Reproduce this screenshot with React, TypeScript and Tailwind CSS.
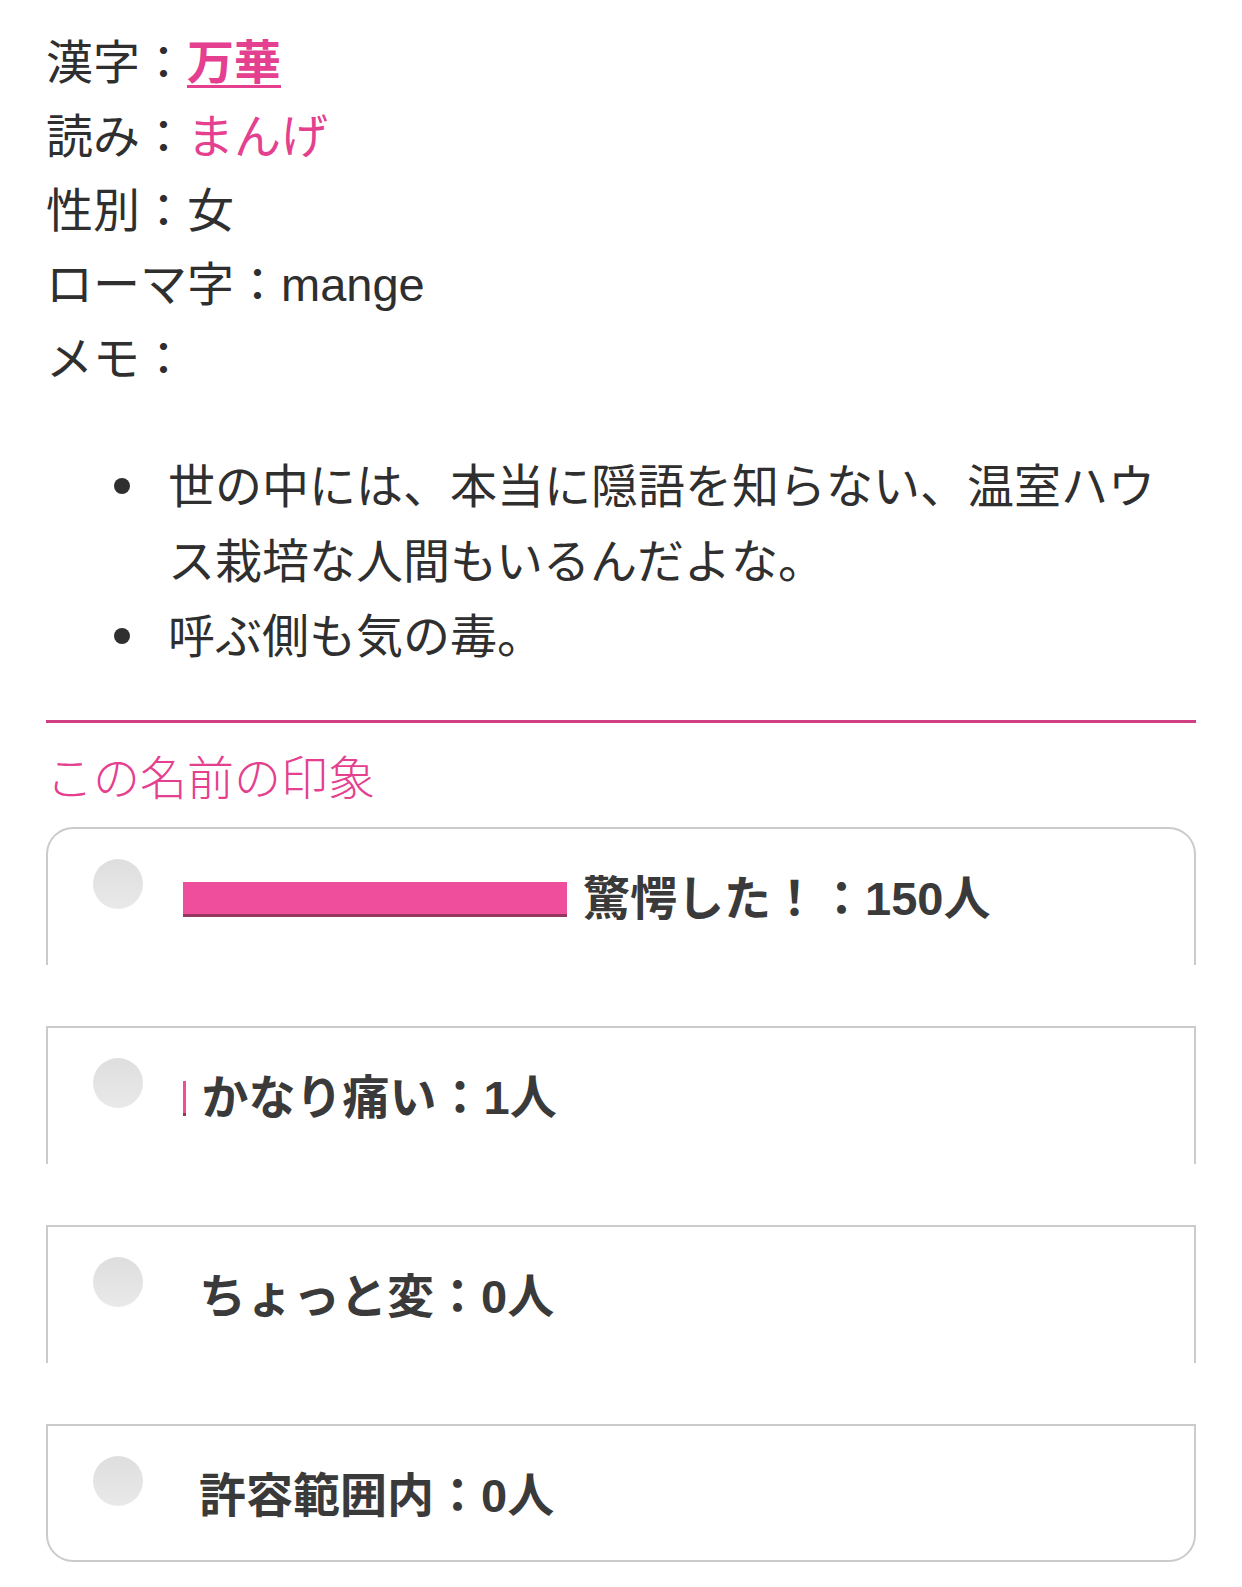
import React from "react";

const FONT = "font-['Liberation_Sans','Noto_Sans_CJK_JP',sans-serif]";

interface Impression {
  label: string;
  count: number;
}

const impressions: Impression[] = [
  { label: "驚愕した！", count: 150 },
  { label: "かなり痛い", count: 1 },
  { label: "ちょっと変", count: 0 },
  { label: "許容範囲内", count: 0 },
];

const MAX_BAR = 384;

const ImpressionRow: React.FC<{ item: Impression; max: number; first: boolean; last: boolean }> = ({
  item,
  max,
  first,
  last,
}) => {
  const barWidth = max > 0 ? (MAX_BAR * item.count) / max : 0;

  return (
    <div
      className={
        last
          ? "flex items-start h-[138px] border-2 border-[#cbcbcb] rounded-b-[27px] bg-white"
          : `flex items-start h-[138px] mb-[61px] border-t-2 border-x-2 border-[#cbcbcb] bg-white ${
              first ? "rounded-t-[27px]" : ""
            }`
      }
    >
      <span className="ml-[45px] mt-[30px] w-[50px] h-[50px] shrink-0 rounded-full bg-gradient-to-b from-[#dedede] to-[#e9e9e9]" />
      <div className="ml-[40px] mt-[45px] h-[50px] flex items-center">
        <span
          className="h-[35px] mr-[16px] shrink-0 bg-[#ee4e9b] border-b-[3px] border-[#93375f]"
          style={{ width: barWidth, borderBottomWidth: barWidth > 0 ? 3 : 0 }}
        />
        <span className="text-[47px] leading-[50px] font-bold text-[#3a3a3a] whitespace-nowrap">
          {item.label}：{item.count}人
        </span>
      </div>
    </div>
  );
};

export default function App() {
  const max = Math.max(...impressions.map((i) => i.count));

  return (
    <div className={`${FONT} bg-white min-h-[1587px] w-[1242px] px-[46px] pt-[26px] text-[#2f2f2f]`}>
      <div className="text-[47px] leading-[74px]">
        <div>
          漢字：<span className="font-bold text-[#e4408f] underline decoration-[3px] underline-offset-[6px]">万華</span>
        </div>
        <div>
          読み：<span className="text-[#e4408f]">まんげ</span>
        </div>
        <div>性別：女</div>
        <div>ローマ字：mange</div>
        <div>メモ：</div>
      </div>

      <ul className="mt-[53px] text-[47px] leading-[75px]">
        <li className="flex">
          <span className="ml-[68px] mr-[38px] mt-[29px] w-[16px] h-[16px] shrink-0 rounded-full bg-[#2f2f2f]" />
          <span>世の中には、本当に隠語を知らない、温室ハウス栽培な人間もいるんだよな。</span>
        </li>
        <li className="flex">
          <span className="ml-[68px] mr-[38px] mt-[29px] w-[16px] h-[16px] shrink-0 rounded-full bg-[#2f2f2f]" />
          <span>呼ぶ側も気の毒。</span>
        </li>
      </ul>

      <div className="mt-[46px] h-[3px] bg-[#d03f84]" />

      <h2 className="mt-[19px] text-[47px] leading-[74px] font-light text-[#e4408f]">この名前の印象</h2>

      <div className="mt-[11px]">
        {impressions.map((item, i) => (
          <ImpressionRow
            key={item.label}
            item={item}
            max={max}
            first={i === 0}
            last={i === impressions.length - 1}
          />
        ))}
      </div>
    </div>
  );
}
